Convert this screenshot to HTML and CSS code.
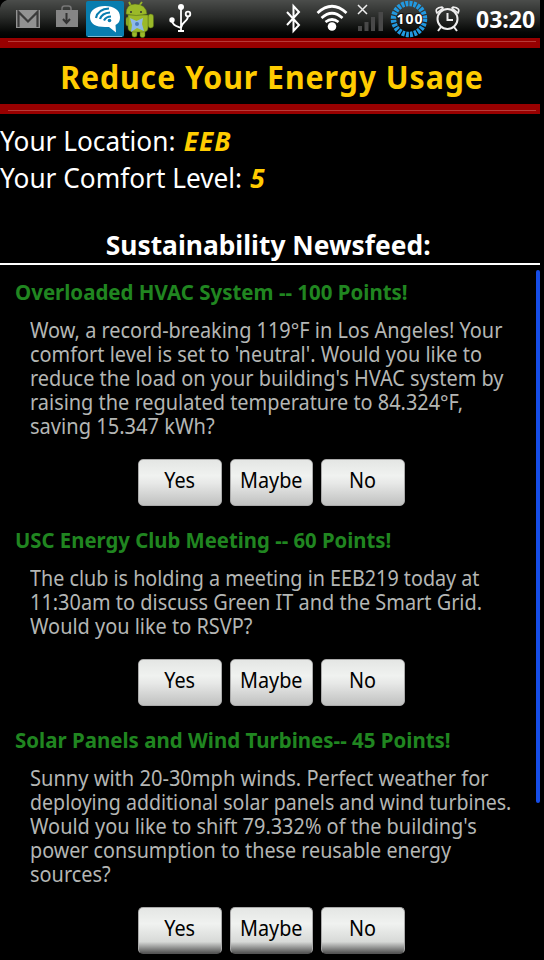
FILE: index.html
```html
<!DOCTYPE html>
<html lang="en">
<head>
<meta charset="utf-8">
<title>Reduce Your Energy Usage</title>
<link rel="stylesheet" href="styles.css">
</head>
<body>
<div class="screen">
  <div class="status">
    <svg class="status-icons" width="200" height="38" viewBox="0 0 200 38">
      <path d="M0 0h7Q1 2 0 8z" fill="#000"/>
      <rect x="16" y="10" width="24" height="18" fill="#929292"/>
      <path d="M18.500 27V12L28 21.500L37.500 12V27" fill="none" stroke="#3b3b3b" stroke-width="2.200"/>
      <path d="M62 11V8.500Q62 6 64.500 6H68.500Q71 6 71 8.500V11" fill="none" stroke="#777" stroke-width="1.500"/>
      <rect x="56" y="10" width="22" height="17" fill="#858585"/>
      <path d="M66.500 13V22M63 19L66.500 23L70 19" fill="none" stroke="#333" stroke-width="2"/>
      <rect x="86" y="1" width="38" height="36" rx="2" fill="#087daf"/>
      <path d="M88 36.500H122" stroke="#7db9d2"/>
      <path d="M105 6C96 6 90 10 90 17C90 24 96 27 105 27L109 27L116 32.500L115.500 25C119 23 120 21 120 17C120 10 114 6 105 6Z" fill="#fff"/>
      <g fill="none" stroke="#087daf" stroke-width="2.200"><path d="M96 18Q98 9 109 8.500M100 19Q102 13 110 12.500M104 20.500Q106 16.500 111 16.500"/></g><circle cx="109.500" cy="20.500" r="1.800" fill="#087daf"/>
      <g fill="#9bb929" stroke="#526b17" stroke-width=".5">
        <path d="M129 2L131 6M142 2L139 6" stroke="#9bb929" stroke-width="1.800"/>
        <rect x="126" y="17" width="4" height="9" rx="2"/><rect x="148" y="14" width="5.500" height="14" rx="2.700"/>
        <rect x="132" y="28" width="5" height="9" rx="2"/><rect x="140" y="28" width="5" height="9.500" rx="2"/>
        <path d="M128 15H148V28Q148 32 143 32H134Q128 32 128 28Z"/><path d="M126 14Q126 4 135 4Q146 4 147 14Q136 17 126 14Z"/>
      </g>
      <circle cx="131" cy="12" r="1" fill="#333"/><circle cx="141" cy="12" r="1" fill="#333"/>
      <path d="M130 18L136.500 21L143 18L142 24L144 31L137 28L131 32L132 25Z" fill="#8db8e9"/><circle cx="137" cy="24" r="2" fill="#497bbd"/>
      <g fill="none" stroke="#fff" stroke-width="1.800"><path d="M181 7V31M172 20C172 25 176 26 181 28C181 22 188 22 188 16M178 31H184"/><circle cx="188" cy="14" r="2.300"/></g>
      <circle cx="181" cy="7" r="3" fill="#fff"/><circle cx="172" cy="20" r="2.700" fill="#fff"/>
    </svg>
    <svg class="status-icons" width="184" height="38" viewBox="280 0 184 38">
      <path d="M287 12L299 25L293.500 31V6L299 12L287 25" fill="none" stroke="#fff" stroke-width="2"/>
      <g fill="none" stroke="#fff" stroke-width="2.700"><path d="M317.500 13Q332 -.5 346.500 13M321.500 18Q332 8.500 342.500 18M325.500 22Q332 17 338.500 22"/></g><circle cx="332" cy="26.500" r="4.300" fill="#fff"/>
      <path d="M358 5L367 14M367 5L358 14" stroke="#eee" stroke-width="1.500"/>
      <path d="M358 26h4v5h-4zM364.500 22h4v9h-4zM371 17h4v14h-4zM378.500 12h4.500v19h-4.500z" fill="#484848"/>
      <circle cx="409" cy="19" r="15.500" fill="none" stroke="#2299e0" stroke-width="5.500" stroke-dasharray="2.900 1.158"/>
      <text class="charge" x="409.500" y="23.800" text-anchor="middle" textLength="26">100</text>
      <g fill="none" stroke="#eee" stroke-width="2"><circle cx="447.500" cy="19" r="10"/><path d="M447.500 13V20H453M441 27L438 31M454 27L457 31"/><path d="M437 13Q434 8 442 7L443 8ZM458 13Q461 8 453 7L452 8Z" stroke-width="1.600"/></g>
    </svg>
    <span class="clock">03:20</span>
  </div>
  <header class="banner"><div class="band band-top"><i></i></div><h1>Reduce Your Energy Usage</h1><div class="band"><i></i></div></header>
  <section class="profile">
    <p>Your Location: <b>EEB</b></p>
    <p>Your Comfort Level: <b>5</b></p>
  </section>
  <h2><span>Sustainability Newsfeed:</span></h2>
  <main class="feed">
    <article>
      <h3>Overloaded HVAC System -- 100 Points!</h3>
      <p><span>Wow, a record-breaking 119°F in Los Angeles! Your</span><span>comfort level is set to 'neutral'. Would you like to</span><span>reduce the load on your building's HVAC system by</span><span>raising the regulated temperature to 84.324°F,</span><span class="loose">saving 15.347 kWh?</span></p>
      <div class="actions"><button><span>Yes</span></button><button><span>Maybe</span></button><button><span>No</span></button></div>
    </article>
    <article>
      <h3 class="tight">USC Energy Club Meeting -- 60 Points!</h3>
      <p><span class="tight">The club is holding a meeting in EEB219 today at</span><span>11:30am to discuss Green IT and the Smart Grid.</span><span>Would you like to RSVP?</span></p>
      <div class="actions"><button><span>Yes</span></button><button><span>Maybe</span></button><button><span>No</span></button></div>
    </article>
    <article>
      <h3>Solar Panels and Wind Turbines-- 45 Points!</h3>
      <p><span class="loose">Sunny with 20-30mph winds. Perfect weather for</span><span class="tighter">deploying additional solar panels and wind turbines.</span><span>Would you like to shift 79.332% of the building's</span><span class="tight">power consumption to these reusable energy</span><span>sources?</span></p>
      <div class="actions faded"><button><span>Yes</span></button><button><span>Maybe</span></button><button><span>No</span></button></div>
    </article>
    <div class="scrollbar"></div>
  </main>
</div>
</body>
</html>
```
FILE: styles.css
```css
* { box-sizing: border-box; margin: 0; padding: 0; }
body { background: #000; font-family: "Noto Sans", "Open Sans", sans-serif; overflow: hidden; }
.screen { width: 540px; height: 960px; overflow: hidden; background: #000; color: #fff; white-space: nowrap; }
.status { height: 38px; display: flex; background: linear-gradient(#4b4d4b, #292b29 45%, #050605 85%, #000); }
.status-icons { display: block; flex: none; }
.status-icons + .status-icons { margin-left: 80px; }
.charge { font: bold 14px "Noto Sans", sans-serif; fill: #fff; stroke: #111; stroke-width: 2px; paint-order: stroke; }
.clock { font-size: 23px; font-weight: 700; line-height: 38px; margin-left: 12px; }
.band { height: 10px; background: #980000; padding: 6px 4px 0 8px; }
.band-top { padding-top: 3px; }
.band i { display: block; height: 1px; background: #b83b38; }
h1 { height: 56px; line-height: 57px; font-size: 32px; text-align: center; color: #fc0; letter-spacing: 1px; transform: translateX(2px) scaleX(.945); }
.profile { height: 114px; padding-top: 8px; font-size: 27px; line-height: 37px; }
.profile p { width: max-content; transform: scaleX(.971); transform-origin: left; }
.profile b { margin-left: 1.5px; color: #fc0; font-style: italic; letter-spacing: 1px; }
h2 { height: 37px; border-bottom: 2px solid #fff; font-size: 26px; line-height: 35px; text-align: center; }
h2 span { display: inline-block; transform: translateX(-2px) scaleX(1.014); }
.feed { position: relative; height: 695px; padding-top: 15px; }
h3 { width: max-content; height: 25px; line-height: 25px; margin-left: 15px; color: #208620; font-size: 21px; transform: scaleX(.975); transform-origin: left; }
h3.tight { transform: scaleX(.967); }
article p { padding: 12px 0 1px 30px; font-size: 22px; line-height: 24px; color: #b4b6b4; }
article p span { display: block; width: max-content; transform: scaleX(.905); transform-origin: left; }
article p .tight { transform: scaleX(.897); }
article p .tighter { transform: scaleX(.89); }
article p .loose { transform: scaleX(.912); }
.actions { display: flex; justify-content: center; gap: 8px; margin: 21px 0 22px; padding-left: 3px; }
button { width: 83.6px; height: 47px; padding-bottom: 8px; border: 1px solid #aaa; border-radius: 5px; background: linear-gradient(#e4e6e4, #f0f2f0 35%, #e7e8e7 52%, #c0c1c0); font: 22px "Noto Sans", sans-serif; color: #000; }
button span { display: inline-block; transform: translateX(-.5px) scaleX(.9); }
.faded button { background: linear-gradient(#e4e6e4, #f0f2f0 35%, #d7d9d7 75%, #555 100%); border-bottom-color: #555; }
.scrollbar { position: absolute; right: 0; top: 5px; width: 4px; height: 533px; border-radius: 2px; background: #164de8; }
```
